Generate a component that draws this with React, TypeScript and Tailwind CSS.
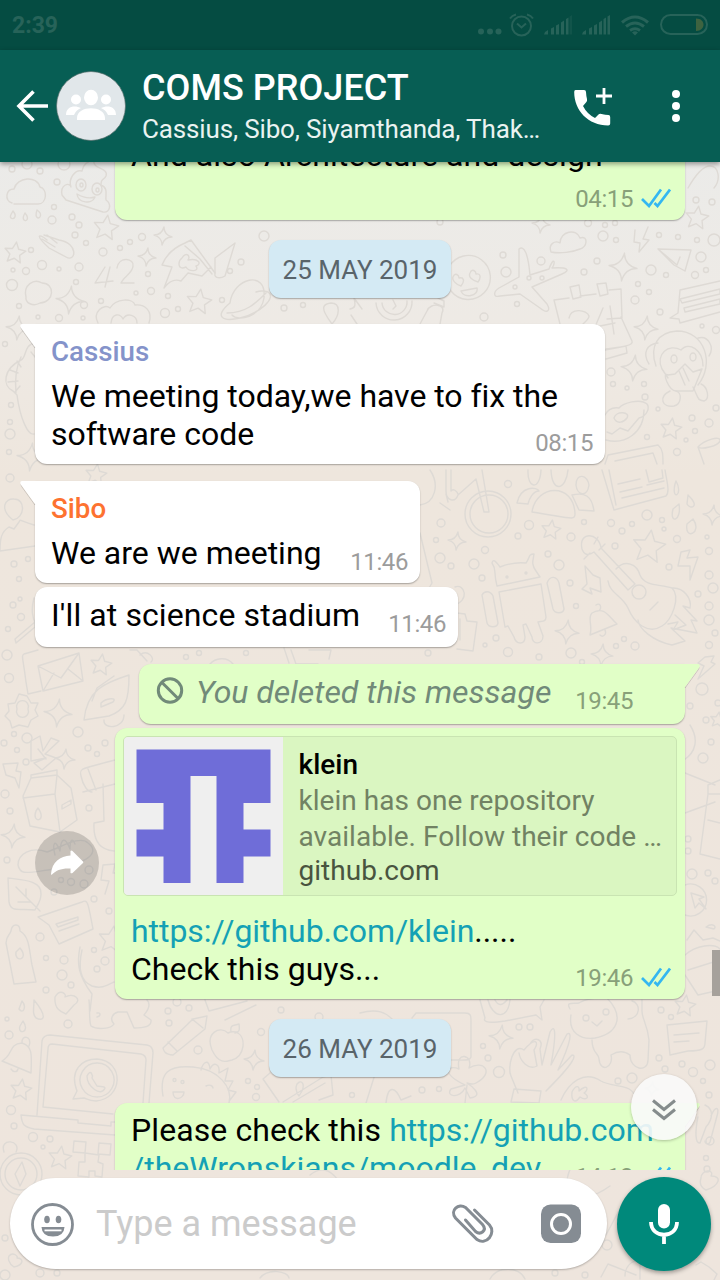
import React from "react";

const CIRCLES: number[][] = [
  [12, 169, 3], [27, 164, 5], [40, 171, 3], [64, 164, 6], [57, 182, 3], [52, 220, 4], [72, 217, 3], [79, 225, 3], [54, 207, 2.5],
  [31, 250, 2.5], [75, 235, 3], [142, 237, 3.5], [130, 242, 2.5], [120, 248, 2.5], [86, 243, 2.5], [103, 252, 4], [42, 265, 4.5], [13, 270, 2], [26, 271, 3.5], [59, 269, 2], [79, 267, 4], [12, 285, 5.5], [76, 282, 2.5],
  [148, 274, 2.5], [151, 291, 3.5], [136, 293, 2], [168, 296, 2.5], [84, 305, 3.5], [101, 301, 2.5], [19, 306, 2.5], [38, 317, 2], [59, 318, 3.5], [83, 318, 2], [165, 313, 4.5], [178, 309, 2.5], [222, 300, 2.5], [230, 271, 2.5], [241, 262, 3], [264, 236, 5], [284, 308, 3], [303, 305, 2.5],
  [5, 344, 2.5], [11, 405, 2.5], [10, 422, 2.5], [10, 434, 5], [9, 452, 2.5],
  [503, 255, 3], [541, 261, 4], [506, 272, 5], [529, 278, 2], [542, 278, 2], [515, 287, 2], [517, 304, 2.5], [484, 317, 4], [597, 261, 3], [584, 272, 3], [603, 236, 5], [616, 240, 2.5], [659, 235, 2.5], [678, 237, 2.5], [697, 240, 2.5], [714, 240, 6], [651, 270, 5], [666, 275, 2.5], [701, 257, 5], [695, 275, 3.5], [706, 270, 2.5], [638, 284, 2.5], [649, 292, 2.5], [635, 300, 4], [660, 312, 3], [702, 326, 2], [716, 330, 3.5],
  [611, 372, 4], [613, 384, 2.5], [627, 388, 2], [644, 384, 2.5], [645, 397, 3], [658, 409, 2], [692, 418, 3], [709, 423, 4], [695, 431, 2.5], [686, 440, 2], [647, 437, 2.5], [677, 452, 3.5], [716, 408, 3],
  [696, 200, 3], [712, 202, 3], [588, 223, 3.5], [605, 225, 2.5], [615, 223, 2.5], [440, 222, 3], [10, 478, 4], [14, 564, 3], [28, 559, 2.5], [19, 579, 2.5], [20, 599, 2], [13, 605, 3], [21, 617, 3.5], [8, 629, 2.5], [7, 655, 5], [9, 678, 4.5],
  [508, 484, 3.5], [441, 523, 4], [436, 540, 2.5], [529, 525, 4.5], [518, 536, 3], [571, 537, 4], [584, 522, 2.5], [611, 523, 3.5], [622, 531, 3], [632, 524, 2.5], [647, 515, 5], [662, 520, 2.5], [664, 529, 2], [677, 539, 3.5], [707, 537, 2], [709, 551, 3.5], [615, 546, 3], [485, 550, 3.5], [548, 554, 3], [440, 558, 5], [451, 566, 3], [474, 564, 5], [559, 565, 5], [482, 578, 3], [570, 583, 3], [669, 567, 3], [709, 575, 4], [713, 588, 5], [698, 594, 3], [709, 606, 4], [709, 620, 5], [715, 633, 3], [709, 645, 3.5], [576, 606, 2.5], [496, 638, 3], [485, 645, 2], [508, 652, 4.5], [539, 657, 3], [571, 653, 5], [616, 646, 2.5], [635, 646, 4], [624, 639, 2.5], [582, 662, 2.5], [428, 653, 3], [186, 657, 2.5], [199, 653, 2.5], [246, 653, 2.5],
  [702, 689, 6], [690, 706, 3], [718, 703, 3], [706, 720, 3], [703, 758, 5], [711, 742, 3],
  [4, 743, 3], [14, 734, 2.5], [27, 738, 5], [17, 750, 2.5], [26, 762, 3], [78, 732, 5], [88, 748, 3], [105, 743, 3], [97, 754, 2.5], [5, 794, 4], [10, 811, 3], [89, 808, 3], [7, 860, 3], [89, 870, 4], [61, 880, 2.5], [71, 882, 3.5], [84, 884, 4], [94, 899, 3], [109, 911, 3], [54, 892, 3], [40, 937, 4], [46, 958, 2.5], [64, 960, 4], [62, 975, 5], [71, 985, 3], [46, 990, 3], [94, 950, 2.5], [105, 961, 4], [97, 969, 3],
  [688, 839, 3], [688, 851, 3], [692, 874, 5], [708, 873, 3], [715, 881, 3],
  [7, 1019, 2], [9, 1035, 4], [68, 1024, 4], [168, 1011, 3], [169, 1023, 3], [177, 1002, 4], [189, 1008, 3], [198, 1050, 4], [261, 1032, 3.5], [281, 1010, 3], [319, 1017, 4], [248, 1081, 2.5], [257, 1087, 2.5], [256, 1097, 3.5], [352, 1095, 2.5], [11, 1110, 4.5], [14, 1126, 3], [33, 1137, 4.5], [50, 1139, 3], [43, 1147, 2], [5, 1238, 3],
  [519, 1027, 3], [530, 1027, 3], [483, 1046, 2.5], [488, 1058, 3], [499, 1072, 5.5], [422, 1090, 3], [439, 1089, 2.5], [661, 1010, 3], [671, 1017, 2.5], [659, 1058, 3], [665, 1069, 3], [682, 1064, 3], [693, 1072, 4.5], [710, 1065, 5], [703, 1081, 2.5], [632, 1078, 5], [618, 1081, 3], [709, 1095, 3], [710, 1141, 4], [706, 1158, 2.5], [707, 1169, 3],
  [607, 1245, 5], [555, 1273, 3], [585, 1275, 3], [5, 1275, 5], [40, 1273, 4], [57, 1273, 3],
];

const STARS: number[][] = [
  [15, 253, 11], [106, 228, 13], [199, 302, 13], [697, 218, 12], [671, 429, 11], [551, 530, 10], [649, 547, 17], [96, 475, 11], [101, 665, 11], [112, 940, 14], [21, 1090, 11], [60, 1158, 12], [685, 1006, 11], [718, 720, 8],
];

const SPARKS: number[][] = [
  [163, 236, 9], [147, 257, 9], [70, 300, 14], [18, 328, 12], [31, 457, 14], [623, 267, 14], [646, 328, 12], [634, 368, 13], [541, 224, 9], [457, 541, 9], [567, 632, 12], [602, 655, 11], [713, 515, 10], [58, 713, 14], [65, 759, 10], [13, 836, 12], [254, 1060, 10], [501, 1037, 12], [652, 1089, 7],
];

const PATHS: string[] = [
  // clouds
  "M12 203c-8-3-6-14 2-14 3-12 23-14 26-2 8 2 7 17-2 17H14",
  "M688 188c8-14 15-22 22-22 9 0 11 14 4 22",
  "M551 252c-3-8 4-12 9-9 0-12 17-15 20-5 9-3 7 10 0 11-7 3-20 5-29 3z",
  "M26 297c-3-12 8-19 16-14 13 0 13 19-2 20-7 4-15 0-14-6z",
  // smiling swirl
  "M62 195c-2-11 8-13 9-8-3-8 4-18 11-16 1-7 6-10 12-11-2 10 15 7 12 16-2 5-5 1-5 9 8 3 4 11 5 15 6 4 4 13-3 12l-37-12z",
  "M77 194c7 4 12 5 18 3-3 8-17 6-18-3z M76 185a5 6 0 1 0 10 0 5 6 0 1 0-10 0 M92 189a5 6 0 1 0 10 0 5 6 0 1 0-10 0 M80 185a1.500 2 0 1 0 3 0 1.500 2 0 1 0-3 0 M96 190a1.500 2 0 1 0 3 0 1.500 2 0 1 0-3 0",
  // rain
  "M13 211c5 6 0 9-2 7-2-2 1-5 2-7z M25 213c5 6 1 9-1 7-2-2 0-5 1-7z M37 210c6 4 3 8 1 8-3-1-2-5-1-8z",
  // mitten and 42
  "M44 235l15 5c20 3 17 23 7 17l-17-9c-13-12-12-16-2-8 M42 239l13 8 M47 235l10 8",
  "M105 267l-10 16 18-2 M110 267l-5 20 M117 268c2-13 18-9 16-2 0 7-10 11-12 17h13",
  // rocket
  "M185 246l15 13 12 15 M215 273l-24-33-6 3c-12 5-19 12-23 22l10 2-8 21c6-8 11-9 17-7l7-8 14 3 9-9",
  "M182 258c4-7 9-2 6 2 11-2 14 4 8 6 4 6-7 6-10 1-9 4-8-6-4-9z M215 258l20-15-10 33c-5 3-11 2-10-2z",
  // saturn
  "M230 303c3-25 37-34 34-5-3 19-26 24-32 17 M230 303c-17 14-7 19 10 15 20-5 37-20 28-26-6-2-12 0-12 0 M227 313c19 0 29-10 39-20",
  // lamb
  "M98 323c-6-11 6-20 12-15 6-10 23-10 25-3 10-1 18 6 14 18 M111 323c1-10 9-10 12-4 4-7 14-4 14 4",
  // pin and note
  "M332 324c-12-16-10-20-1-21 10 0 9 12 1 21z M350 309c5-1 6-3 4-11l8 11 M357 324l-6-9",
  // clock and bottle
  "M376 303a18 18 0 1 0 36-2 M382 303a12 12 0 1 0 25-2 M393 300l3 6-3 3 M420 324l7-13c3-9 20-7 15 2l-2 11 M434 303l10 4v-6l-6-3",
  // heart eyed face
  "M449 267a22 22 0 1 1 2 24 M453 277c2-5 6-2 6 1 5-1 6 3 2 8-6-2-9-6-8-9z M470 273c2-5 6-2 6 1 5-1 5 4 2 8-6-2-10-5-8-9z M461 291l16-3c2 8-13 11-16 3z",
  // aeroplane
  "M519 249c5-4 9 4 11 26l19-6c5-14 7-6 3-1 16-1 19 2 10 6l-30 13 15 17c4 7 0 10-7 4l-20-14-20 2c-8 2-6-5-1-8l20-11z",
  // calendar
  "M554 300l15-2m11-2 16-2m13-4 12-1 1 29-15 1 M554 300l6 24 M570 287l9-2 2 12-8 2z M597 284l9-1 2 11-8 2z M605 350l21-4 1 7-21 6 M621 317l11 24c2 5-12 6-26 8 M569 318c2-11 18-8 20-2 0 3-3 5-6 8",
  "M603 308l-8 19 20-4 M610 306l4 28",
  // bolts
  "M635 230l-1 12 6 1-1 9 10-12-6-1 5-12 M681 552l9-2-3 8 11-1-8 23v-14h-12l3-14z M585 566l8 9 7 3 1 14-11-4 2 6-10-5 5-5-2-18z M3 764l15-1-2 8 5 1-2 16-4-10-9-3z M103 865l12-1-2 9 4 0 M103 865l-2 15 8 1-4 13 M705 657l9-1-3 6 4 2-17 15 6-13-6-3z",
  // paper plane and chat strip
  "M658 249l33 1-6 21-11-6z M658 249l19 16 3-8 M720 281l-40 9-2 23-8 5 9 1 1 4 40-11 M680 299l40-10v5l-38 9z M684 308l36-9v5l-35 8z",
  // monkey
  "M656 366c-7-20 2-34 21-35 28 0 38 33 21 54 M658 343c-11 1-16 10-9 21 M698 338c10-3 17 9 11 18 M681 350c8-9 22 0 22 16 M681 350c-12-7-26 4-19 19l6 9 M671 359a3 4 0 1 0 6 0 3 4 0 1 0-6 0 M690 357a3 4 0 1 0 6 0 3 4 0 1 0-6 0 M668 375c-7-4 1 16 8 16l17 0 9-22-9 3-8-8-10 10-7 1",
  "M670 391c-12 6-8 17 4 15 8-2 8-14 2-15 M693 387c6 12 4 13 11 14 6-2 4-14-3-17 M679 371l6 14 M683 368l6 13",
  // doughnut
  "M605 415c3-6 7-8 14-7 4-5 21-10 28-4 3 4 0 12-8 14l-11 13-8-3-8 6-5-2 M606 440c19 5 38-7 38-30 M614 418c2-8 17-6 13 0-3 4-10 7-13 0z",
  // tree and snail
  "M35 343c-12 2-8 15-14 17-18 9-19 26-8 31l4 4c3 23 11 41 17 39 M31 352l4 5 M17 361l4 6 M10 370l8 3 M8 382l10-1 M15 392l5-6 M21 357c-5 10-6 25-5 36",
  // cup
  "M698 447c6-7 23-12 22-6-2 5-19 9-22 6l6 17 M605 464l3-9 50-10c5 4 5 10 5 19 M615 461l38-8 4 11",
  // people
  "M13 520c-14-11-8-22 1-21 12 0 11 19-1 21z M34 525c-16-5-13-6-15-3l-5 7-5-2c-8 5-9 12-9 24l35-5",
  "M528 470c-1 19 12 21 13 0 M551 470c1 24 15 20 17 0 M576 485c0-13 12-10 13 0-2 13-12 10-13 0z M517 503c4-18 20-16 22-12-6 0-10 8-11 13z M532 512c4-28 42-30 43 2 0 7-4 4-43-2z M572 495c13-3 20 1 22 16l-15-1z",
  // bicycle
  "M465 514a23 23 0 1 0 46 0 23 23 0 1 0-46 0z M470 514a19 19 0 1 0 38 0 19 19 0 1 0-38 0z M482 470l7 42h-5l-8-33-18 16c-3 8-12 6-12-4v-21 M451 470v21c2-3 6 0 7 3 M440 503l10 7 M448 502l-2-8 M430 470c10 15 5 33-10 35",
  // newspaper
  "M602 470l12 40 52-14c4-4 1-14-1-26 M609 470l7 35 M618 484l22-5 M620 492l22-5m5-2 17-4 M622 498l42-10 M646 470l3 12 14-4-1-8",
  // drops
  "M676 481c8 14-5 21-1 3z M688 495c13 12 2 15-1 9z M679 504c3 17-10 21-6 5z M693 519c10 14-9 22-6 5z",
  // android
  "M497 586c-4-15 0-16-5-23 1-4 3-3 8 4 10-4 17-5 26-4 4-5 2-9 8-9-1 7-3 10 2 17l4 6z M499 592l42-8 5 33c0 5-4 4-8 5l5 14c0 9-11 9-11 1l-6-13-3 1 2 12c0 8-9 8-11 0l-6-11-3 1z M482 595c2-4 8-5 11 1l5 27c-1 5-9 5-11 0z M547 583c3-8 10-7 12 0l5 26c-1 5-9 5-11 0z M506 577a1 1 0 1 0 2 0 1 1 0 1 0-2 0 M525 573a1 1 0 1 0 2 0 1 1 0 1 0-2 0",
  // guitar
  "M582 549c-4-18 17-17 19-1l34 36-7 6-34-38c-6 4-10 3-12-3z M616 569c9-10 21-5 24 6 5 12 20 9 32 13 9 9 0 32-10 38-14 9-28-3-34-18-6-13-18-14-20-27 M632 592a7 7 0 1 0 14 0 7 7 0 1 0-14 0 M650 610l8-8 M594 544l4-7 M599 550l6-6 M584 559l6-6 M672 588c12-1 20 11 18 20l-7-2 14 15-6-1 6 13-26-5 14 13-13 4c-19-4-33-16-34-25 M668 624l10-2-5 8 13-5-11-10",
  // bell
  "M590 635c3-10-3-17 2-22 13-7 16 3 25 11z M596 605c6-4 6 7 1 6 M600 635c3 3 7-1 5-5",
  // camera and comma
  "M455 587c10-4 15 14-1 18 3-4-1-7-2-9 M457 613l8 1 2 7 10 1-4 29-16-2 M460 619v21 M420 533l12 50-3 5-7 0",
  // envelopes
  "M38 650l-14 4c-3 2-1 3 2 28l2 12 13-3 M38 666l41-13 4 28-40 10z M38 666l23 12 18-25 M43 691l11-18 M83 681l-15-12",
  // gear
  "M19 694l8 2 4 7 7 0-3 7 3 6-7 4-3 7-9-2-7 3-2-7-5-5 4-5-1-7 7-1z M17 709a6 6 0 1 0 11 0 6 6 0 1 0-11 0",
  // small rocket
  "M84 720c3-30 20-37 45-45 0 25-3 35-20 41z M101 703c5-5 17-6 12-1l-12 5z M92 701l5-13 17-12 M104 720c-1 10 20 9 20-5",
  // envelope peeking and photo
  "M291 650l5 14 22 0 M309 650l22 0-2 9 M284 648l5 15 M210 664c5-6 17-8 23 0 M130 650l7 0 10 11 M140 655c7-6 16 3 11 7",
  // windmill
  "M31 741l9-5 3 15 8-13 8 3-14 13 11 4-14 12-8-7 12-5-15 3z M38 749l8 10",
  // milk carton
  "M23 796l8-18 26-3 14 13 6 32-17 12-30-6z M23 798l32-4 2-19 M55 794l5 38 M31 778l0-3 26-5v6 M62 805l9-5v4l-9 5z M38 808c10 14-7 16-2 3z",
  // cylinder and scroll
  "M81 776c-2-8 0-7 34-16 M83 792l32-8 M81 776c2 10 7 16 11 16 M88 769l8 21 M103 784l1 37-10 2c-1 18 6 27 20 28",
  // baguette
  "M47 852c-16-6-29 2-29 13 2 10 8 8 30 5 33-4 55-16 40-27-8-8-26 4-41 9 M55 855c-3-12 0-17 5-4 1-13 5-15 10-2 0-9 2-12 5-5",
  // leaf
  "M8 878c17 2 34 3 33 16 0 8-5 13-6 16-16-2-24 3-26-8z M16 887l24 24 M26 897v-8 M31 902l-13 0",
  // message box
  "M38 917l44-15c6-3 6 1 11 27l-34 15-10-19z M56 924l22-7v3l-20 7z M59 931l20-7",
  // bottle
  "M11 931c1-8 9-8 9 0 10 6 9 19 12 34l4 17-22 2-8-41c0-7 4-8 5-12z M20 948c10 12-6 15-4 4z",
  // banana
  "M82 950c-4 18-2 31 10 36 9 3 14 0 22-4 M80 947c-3 15-3 27 12 47l-2 17",
  // hearts
  "M55 997c5-9 12-3 10 0 9-5 18 3 9 8l-8 9c-5-2-12-5-11-17z M9 1256c4-5 10 1 8 2 7 0 7 7-3 9-6-4-6-9-5-11z M701 1178c0-9 14-9 10-2 12 0 8 10-5 14-4-2-7-6-5-12z",
  // polar bear
  "M89 1000c1 10 0 22 2 26 6 4 20 3 23-2-5-5-1-11 4-12l9 0 7 16c9 0 18-1 17-8l-7-5c5-6 7-11 3-15 M97 1013c4-1 4 3 0 4",
  "M22 1001l-3 8c4 6 8-2 3-8z M34 1000c14 17 10 22 2 18-4-4-2-9-2-18z M23 1021c8 12-6 14-3 5z",
  // pencil and apple
  "M163 1048l30-29 14-3-2 13-32 26c-9-1-9-4-10-7z M168 1042l9 9 M192 1019l11 9 M228 1033c-8-8-23 0-16 17 8 17 17 10 20 10 13-4 14-22 6-27-4-2-8-1-10 0z M231 1032c-1-8 2-6 8-8 1 7 0 8-4 9",
  // bell left
  "M2 1061c12-7 6-17 20-18 10 3 10 10 9 30z M22 1043c-1-9 11-7 7 3 M11 1069c2 3 6 4 7 0",
  // laptop
  "M37 1115l5-74c1-5 4-6 8-6l97 10c5 1 6 5 6 8l-4 50 M43 1107l5-58c0-4 2-5 4-5l89 10c4 1 5 4 5 6l-3 43 M43 1107l70 7 M21 1115l57 5v3l33 3v-4l4 0 M21 1115c1 10 3 12 13 14l81 6",
  "M73 1099l4-8c-8-21 5-32 20-32 28 2 26 40-1 42-7 0-9-2-12-3z M97 1063a17 17 0 1 0 .1 0 M87 1076c4-8 6 0 5 2l5 8c3 1 7 0 8 2-4 10-18-2-18-12z",
  // dinosaur
  "M163 1096c-4-24 6-31 30-29 26 2 40 21 36 36 M201 1070c2-8 8-12 9-1 4-8 10-5 9 4l9-5-3 13 8 0-5 9 8 2-6 8 M173 1092l11 0c0 7-11 10-11 0z M173 1080a1.500 1.500 0 1 0 3 0 1.500 1.500 0 1 0-3 0 M181 1082a1.500 1.500 0 1 0 3 0 1.500 1.500 0 1 0-3 0 M206 1086c4-2 7 0 7 2",
  // wallet map
  "M263 1079l7-6 M263 1079l16 23 M299 1096c-10-15 9-20 3-5z M283 1102l40-25 8-2 2 20-14 5 M293 1102l32-19",
  // compass and robot
  "M0 1174a20 20 0 1 1 42 0 21 21 0 0 1-42 0z M5 1174a16 16 0 1 1 32 0 16 16 0 1 1-32 0z M22 1162l4 12-6 12-5-12z M4 1152c-5-15 18-12 12 0",
  "M74 1141l12 1-1 11-12-1z M99 1143l12 1-1 11-12-1z M85 1153l14 2-1 7 5 2-1 13-7-1v-5h-6v6l-11-1 1-14 6 0z",
  // seated laptop and tablet
  "M480 1000l5 18c-3 5 7 5 20 3l31-6 6 5-2-13 4-7 M488 1000c5 19 20 20 22 0 M495 1000c3 6 7 6 12 0",
  "M412 1018l4-5 49 0c6 0 6 3 6 8v36c-1 4-5 3-20 3 M360 1013c18-5 26 0 32 6",
  "M205 1000l4 11 38-10 M225 1020l31-15",
  // clover
  "M465 1085c-25-12-17-21-6-16-4-19 15-14 10-1 15-9 26 5 7 15-3 2-9 0-9 0s20 13 3 15l-5-10c-5 11-20 9-14 1z M467 1085l-2 18",
  // ok hand
  "M518 1093l-7-17c-4-8 2-34 13-26 11-13 16-9 10 0l3 16c-9 5-17-6-18-13 M530 1044c5-8 14-5 10 5l2 16 8-33c5-9 7-1 1 33l16-31c5-3 5 6-9 36l14-15c5 0 2 8-26 36 M514 1089l27 2-2 12-28-1z",
  // cat
  "M570 1009c-5-8 4-5 9-6 6-4 13-4 17-5 5-1 8-2 11 0 19 20 9 36-12 40-14 2-27-5-24-23 M583 1018a3 3 0 1 0 6 0 3 3 0 1 0-6 0 M603 1012a3 3 0 1 0 6 0 3 3 0 1 0-6 0 M592 1022l5 4 5-5 M592 1040c0 14 7 13 7 19 1 14 15 9 12-4 8-5 14-4 19 0 0 15 18 18 18 5l1-20c-2-18-8-22-7-31l0-9 M632 1001c9 2 9 17-4 18",
  "M561 1100c8-18 23-30 40-19 10 6 28 3 33 13 M572 1092c4-8 8-6 7-1 9-8 10-1 5 2 7 4 2 8-4 4-5 7-9 4-8-5z",
  // note box
  "M667 1025l40-4-2 22c0 6-3 8-17 8l-18 4z M674 1035l25-2 M674 1042l15-1",
  // party horn
  "M366 1103l10-32 M386 1103c2-20 10-15 15-3l10-4 M373 1075l5-4",
  // kite, bulb, arcs
  "M685 773l30 12 M685 813l30-11 M720 780l-12 5v9h12 M708 794l-8 60 20 5 M708 820l12 3 M684 760c12-8 15-21 6-35",
  "M685 885a16 16 0 1 1 0 30 M691 893l13 4-5 2 7 10-7-6-4 5z",
  "M687 940l7-10 9 10 10-2 7 3 M685 955c11-10 29-12 35-6 M685 975l13 20 22-5 M688 970l32-10 M706 927c7-5 11 0 8 2z",
  // objects behind the composer
  "M567 1180c4-24 22-29 34-13 M568 1190c8 14 28 6 42-4 M606 1235l16-30 M601 1277l7-13 28 11 M625 1276c0-18 22-21 31-6 M640 1264v15 M696 1265l5-3 8 5 8 7-3 6 M310 1175c10-8 19-7 28 5 M260 1278c8-10 28-7 29 0 M490 1279c8-14 30-12 35 0",
  "M705 1105c9 4 8 14 1 22l-6 16c-5 1-5-12-2-26 M711 1116c4-10 9-10 6 0l-7 26c-1 3-5 2-5-1",
  "M15 639l20-17v5l-19 16z M36 625c-4-8-5-15-2-27",
];

const starPath = "M0-1 .28-.38.95-.3.45.16.6.82 0 .48-.6.82-.45.16-.95-.3-.28-.38Z";
const sparkPath = "M0-1Q.1-.15 1 0 .15.1 0 1-.1.15-1 0-.15-.1 0-1Z";

function Wallpaper() {
  return (
    <svg className="absolute inset-0 h-full w-full" viewBox="0 0 720 1280" aria-hidden="true">
      <defs>
        <linearGradient id="paper" x1="0" y1="0" x2="0" y2="1">
          <stop offset="0.12" stopColor="#ebebe9" />
          <stop offset="0.25" stopColor="#eeeae5" />
          <stop offset="0.37" stopColor="#eee6dd" />
          <stop offset="1" stopColor="#eee5dd" />
        </linearGradient>
      </defs>
      <rect width="720" height="1280" fill="url(#paper)" />
      <g fill="none" stroke="#dedad5" strokeWidth="1.4" strokeLinejoin="round" strokeLinecap="round">
        {CIRCLES.map(([x, y, r], i) => (
          <circle key={i} cx={x} cy={y} r={r} />
        ))}
        {STARS.map(([x, y, r], i) => (
          <path key={i} d={starPath} transform={`translate(${x} ${y}) rotate(8) scale(${r})`} strokeWidth={1.4 / r} />
        ))}
        {SPARKS.map(([x, y, r], i) => (
          <path key={i} d={sparkPath} transform={`translate(${x} ${y}) rotate(6) scale(${r})`} strokeWidth={1.4 / r} />
        ))}
        {PATHS.map((d, i) => (
          <path key={i} d={d} />
        ))}
      </g>
    </svg>
  );
}

function StatusBar() {
  return (
    <div className="flex h-[50px] shrink-0 items-center justify-between bg-[#054c42] pl-3 pr-[12px] text-[#276359]">
      <span className="pt-[2px] text-[23px] font-bold leading-[30px]">2:39</span>
      <svg className="h-[50px] w-[232px]" viewBox="476 0 232 50" fill="none" stroke="currentColor">
        <g fill="currentColor" stroke="none">
          <circle cx="481" cy="31.500" r="3" />
          <circle cx="490" cy="31.500" r="3" />
          <circle cx="498.500" cy="31.500" r="3" />
          <path d="M545 32l3-2v4.500h-4zM551 28.500l3-1.500v7.500h-3zM556 25.500l3-1.500v10.500h-3zM561 22.500l3-2v14h-3zM566 19l2.500-1.500v17H566z" />
          <path d="M569.500 16.500l2.500-1.500v19.500h-2.500z" opacity=".35" />
          <path d="M583 32l3-2v4.500h-4zM589 28.500l3-1.500v7.500h-3zM594 25.500l3-1.500v10.500h-3zM599 22.500l3-2v14h-3zM603.500 19l2.500-1.500v17h-2.500zM607.500 16.500l2.500-1.500v19.500h-2.500z" />
          <path d="M635 35.500l-3-3q3-2.500 6 0z" />
        </g>
        <g strokeWidth="2">
          <circle cx="521.500" cy="26" r="9.500" />
          <path d="M517 23.500l4.500 4 4.500-4M510 18.500q2-3 6-4M533 18.500q-2-3-6-4" />
        </g>
        <g strokeWidth="3">
          <path d="M622 22.500q13-11 26 0M626 26.500q9-7 18 0M630 30.500q5-3.500 10 0" />
        </g>
        <rect x="661" y="15" width="46" height="19" rx="9.500" strokeWidth="2" />
        <path d="M696 18.500c5 0 7.500 3 7.500 6.200s-2.500 6.200-7.500 6.200z" fill="#3e6340" stroke="none" />
      </svg>
    </div>
  );
}

function Header() {
  return (
    <header className="z-10 flex h-[112px] shrink-0 items-center bg-[#075e54] text-white shadow-[0_2px_5px_rgba(0,0,0,0.4)]">
      <svg className="ml-4 h-8 w-8" viewBox="0 0 32 32" fill="none" stroke="currentColor" strokeWidth="3.600">
        <path d="M17.500 1.500 3 16l14.500 14.500M3 16h29" />
      </svg>
      <svg className="ml-2 h-[70px] w-[70px]" viewBox="0 0 70 70" fill="#fff">
        <circle cx="35" cy="35" r="34.500" fill="#e1e7ea" stroke="#526c68" strokeWidth="0.700" />
        <ellipse cx="35" cy="26.500" rx="7" ry="7.700" />
        <circle cx="20" cy="28.500" r="5" />
        <circle cx="50" cy="28.500" r="5" />
        <path d="M21 49v-2c0-13 28-13 28 0v2zM10 44c0-9 9-10 15-7q-5 2-7 7zM60 44c0-9-9-10-15-7q5 2 7 7z" />
      </svg>
      <div className="ml-4 flex w-[400px] flex-col whitespace-nowrap">
        <span className="text-[36px] font-medium leading-[42px] tracking-[0.05px]">COMS PROJECT</span>
        <span className="mt-1 text-[26px] leading-[32px] tracking-[-0.15px] text-[#eaf3f1]">
          Cassius, Sibo, Siyamthanda, Thak…
        </span>
      </div>
      <svg className="ml-[31px] h-10 w-10" viewBox="573 86 40 40" fill="currentColor">
        <path d="M575.500 90h8.500q2 0 2 2 .2 4 1 7 .5 2-1 3.500L583 106q4 8 12 12l3.500-3.500q1-1 3-.500 4 1 7 1 1.700 0 1.700 2v6.500q0 2-2 2c-20 0-34-15-34-33.500q0-2 1.300-2z" />
        <path d="M602.600 88h2.800v6.600h6.600v2.800h-6.600v6.600h-2.800v-6.600H596v-2.800h6.600z" />
      </svg>
      <svg className="ml-[59px] h-8 w-2" viewBox="0 0 8 32" fill="currentColor">
        <circle cx="4" cy="4" r="4" />
        <circle cx="4" cy="16" r="4" />
        <circle cx="4" cy="28" r="4" />
      </svg>
    </header>
  );
}

function Ticks() {
  return (
    <svg className="-mt-[2px] ml-2 h-[20px] w-[30px]" viewBox="0 0 30 20" fill="none" stroke="#34b7f1" strokeWidth="2.700">
      <path d="M1 11l7 7L20 1.500M13.500 15l3 3L29 1.500" />
    </svg>
  );
}

function Time({ children, out, read }: { children: string; out?: boolean; read?: boolean }) {
  return (
    <div
      className={
        "-mb-1 flex items-center text-[24px] leading-[28px] tracking-[-0.4px] " +
        (out ? "text-[#88a079]" : "text-[#9c9c9c]")
      }
    >
      <span>{children}</span>
      {read && <Ticks />}
    </div>
  );
}

function Tail({ side }: { side: "left" | "right" }) {
  return side === "left" ? (
    <svg className="absolute -left-[15px] top-0 h-[25px] w-[20px]" viewBox="0 0 20 25">
      <path d="M2 1.500Q0 4 2 6l13 18" fill="none" stroke="#000" strokeOpacity=".14" />
      <path d="M20 0H2Q0 0 .3 2T2 5l13 18h5z" fill="#fff" />
    </svg>
  ) : (
    <svg className="absolute -right-[15px] top-0 h-[25px] w-[20px]" viewBox="0 0 20 25">
      <path d="M19 3q0 2-1 3L5 24" fill="none" stroke="#000" strokeOpacity=".14" />
      <path d="M0 0h18q2 0 1.700 2T18 5L5 23H0z" fill="#e1ffc7" />
    </svg>
  );
}

const inBubble = "relative ml-[35px] self-start rounded-xl bg-white pl-4 pr-3 shadow-[0_1px_1.500px_rgba(0,0,0,0.3)]";
const outBubble = "relative mr-[35px] self-end rounded-xl bg-[#e1ffc7] pl-4 shadow-[0_1px_1.500px_rgba(0,0,0,0.3)]";
const line = "flex h-[38px] items-end justify-between whitespace-nowrap";
const sender = "mb-2 h-[34px] text-[27.7px] font-medium leading-[34px]";

function DatePill({ children }: { children: string }) {
  return (
    <div className="flex h-[58px] w-[182px] shrink-0 items-center justify-center self-center rounded-xl bg-[#d4eaf4] pt-[2px] text-[26px] text-[#59646a] shadow-[0_1px_1.500px_rgba(0,0,0,0.3)]">
      {children}
    </div>
  );
}

function LinkPreview() {
  return (
    <div className="flex h-[160px] overflow-hidden rounded-[5px] border border-[#c9e4b2] bg-[#daf6c1]">
      <svg className="h-[158px] w-[159px] shrink-0" viewBox="0 0 159 158">
        <rect width="159" height="158" fill="#efefef" />
        <path
          d="M12.500 12.500h134v53.500h-27v26.500h27v27h-27v26.500h-27V39H66.500v107h-27V119.500h-27V92.500h27V66h-27z"
          fill="#6f6dd8"
        />
      </svg>
      <div className="flex flex-col whitespace-nowrap pl-[15.500px] pt-[11px] text-[28px] tracking-[0.03px]">
        <span className="h-[36px] font-medium leading-[34px] text-black">klein</span>
        <span className="h-[36px] leading-[34px] text-[#718263]">klein has one repository</span>
        <span className="h-[34px] leading-[34px] text-[#718263]">available. Follow their code …</span>
        <span className="h-[36px] leading-[34px] text-[#49543f]">github.com</span>
      </div>
    </div>
  );
}

function Composer() {
  return (
    <footer className="relative flex h-[110px] shrink-0 items-start pl-[10px] pt-[7px]">
      <div className="mt-px flex h-[91px] w-[597px] items-center rounded-full bg-white pl-[21px] shadow-[0_1px_2px_rgba(0,0,0,0.25)]">
        <svg className="h-[44px] w-[44px]" viewBox="0 0 44 44" fill="#858c93">
          <circle cx="21.500" cy="22.500" r="20" fill="none" stroke="#858c93" strokeWidth="2.800" />
          <ellipse cx="16" cy="17.500" rx="2.800" ry="3.800" />
          <ellipse cx="27.500" cy="17.500" rx="2.800" ry="3.800" />
          <path d="M10.500 25h23q-.5 9.500-11.500 9.500T10.500 25z" />
          <path d="M13.500 27.500h17v1.800h-17z" fill="#fff" />
        </svg>
        <span className="ml-[21px] w-[355px] pt-px text-[36px] text-[#cbcbcb]">Type a message</span>
        <svg className="h-[42px] w-[44px]" viewBox="451 1203 44 42" fill="none" stroke="#858c93" strokeWidth="3" strokeLinecap="round">
          <path d="M474.500 1210l15 15c7 8-3 21-12.500 14.500L455.500 1218c-6-8 3-15 10-10.500l17 17c5 6-2 11-7 7l-10-11.500" />
        </svg>
        <svg className="ml-[45px] h-[40px] w-[42px]" viewBox="0 0 42 40">
          <rect x="1" y="0.500" width="40" height="38.500" rx="9.500" fill="#858c93" />
          <circle cx="21" cy="20" r="9.500" fill="none" stroke="#fff" strokeWidth="3" />
        </svg>
      </div>
      <button className="ml-[10px] flex h-[94px] w-[94px] items-center justify-center rounded-full bg-[#00897b] shadow-[0_2px_4px_rgba(0,0,0,0.35)]" aria-label="Record">
        <svg className="h-[42px] w-[30px]" viewBox="0 0 30 42" fill="none" stroke="#fff">
          <path d="M15 7v12.500" strokeWidth="12" strokeLinecap="round" />
          <path d="M2 19c0 17 26 17 26 0M15 32v9" strokeWidth="3.800" />
        </svg>
      </button>
    </footer>
  );
}

export default function App() {
  return (
    <div className="relative flex h-[1280px] w-[720px] flex-col overflow-hidden font-['Roboto',sans-serif] text-black">
      <Wallpaper />
      <div className="relative z-10 flex shrink-0 flex-col">
        <StatusBar />
        <Header />
      </div>
      <main className="relative flex h-[1008px] shrink-0 flex-col overflow-hidden text-[32px] leading-[38px]">
        <div className={outBubble + " -mt-[38px] flex h-[96px] w-[570px] shrink-0 flex-col pr-[14px] pt-3"}>
          <div className={line + " tracking-[0.06px]"}>And also Architecture and design</div>
          <div className="mt-[11px] flex justify-end">
            <Time out read>04:15</Time>
          </div>
        </div>
        <div className="mt-5 flex flex-col">
          <DatePill>25 MAY 2019</DatePill>
        </div>

        <div className={inBubble + " mt-[26px] h-[140px] w-[570px] shrink-0 rounded-tl-none pt-[11px]"}>
          <Tail side="left" />
          <div className={sender + " text-[#8493ca]"}>Cassius</div>
          <div className={line + " tracking-[-0.03px]"}>We meeting today,we have to fix the</div>
          <div className={line}>
            <span>software code</span>
            <Time>08:15</Time>
          </div>
        </div>

        <div className={inBubble + " mt-[17px] h-[102px] w-[385px] shrink-0 rounded-tl-none pt-[11px]"}>
          <Tail side="left" />
          <div className={sender + " text-[#fd7230]"}>Sibo</div>
          <div className={line}>
            <span>We are we meeting</span>
            <Time>11:46</Time>
          </div>
        </div>

        <div className={inBubble + " mt-1 h-[60px] w-[423px] shrink-0 pt-[9px]"}>
          <div className={line}>
            <span className="tracking-[0.1px]">I'll at science stadium</span>
            <Time>11:46</Time>
          </div>
        </div>

        <div className={outBubble + " mt-[17px] h-[60px] w-[546px] shrink-0 rounded-tr-none pr-[52px] pt-[9px]"}>
          <Tail side="right" />
          <div className={line}>
            <span className="flex items-center italic text-[#718a79]">
              <svg className="mb-1 ml-px mr-3 h-[28px] w-[28px]" viewBox="0 0 28 28" fill="none" stroke="currentColor" strokeWidth="3">
                <circle cx="14" cy="14.500" r="11.700" />
                <path d="M5.700 6.200l16.600 16.600" />
              </svg>
              You deleted this message
            </span>
            <Time out>19:45</Time>
          </div>
        </div>

        <div className="mt-1 flex shrink-0 items-center">
          <svg className="mb-px ml-[35px] h-16 w-16" viewBox="0 0 64 64">
            <circle cx="32" cy="32" r="32" fill="#000" opacity=".16" />
            <path d="M16 43c1-12 9-18 19.500-18.500V20q1-1 2 0L48 30.500q.7.700 0 1.400L37.500 42q-1 .7-2 0v-4.500C27 37 21 39 16.500 44z" fill="#fff" />
          </svg>
          <div className={outBubble + " ml-4 h-[271px] w-[570px] pr-[14px] pt-2"}>
            <div className="-ml-2 -mr-[6px]">
              <LinkPreview />
            </div>
            <div className={line + " mt-4 justify-start tracking-[-0.04px]"}>
              <span className="text-[#14a1b5]">https://github.com/klein</span>
              <span>.....</span>
            </div>
            <div className={line}>
              <span>Check this guys...</span>
              <Time out read>19:46</Time>
            </div>
          </div>
        </div>

        <div className="mt-5 flex flex-col">
          <DatePill>26 MAY 2019</DatePill>
        </div>

        <div className={outBubble + " mt-[26px] h-[95px] w-[570px] shrink-0 rounded-tr-none pr-[14px] pt-2"}>
          <Tail side="right" />
          <div className={line}>
            <span>
              <span className="tracking-[0.1px]">Please check this </span>
              <span className="text-[#14a1b5]">https://github.com</span>
            </span>
          </div>
          <div className={line}>
            <span className="text-[#14a1b5]">/theWronskians/moodle_dev</span>
            <Time out read>14:13</Time>
          </div>
        </div>

        <div className="absolute right-0 top-[788px] h-[46px] w-2 bg-[#a6a19b]" />
        <button className="absolute right-[23px] top-[912px] flex h-[66px] w-[66px] items-center justify-center rounded-full bg-[#fafafa]/90 shadow-[0_1px_3px_rgba(0,0,0,0.25)]" aria-label="Scroll to bottom">
          <svg className="mt-[6px] h-6 w-6" viewBox="0 0 24 24" fill="none" stroke="#858c8c" strokeWidth="3">
            <path d="M1 2.500l11 9 11-9M1 11.500l11 9 11-9" />
          </svg>
        </button>
      </main>
      <Composer />
    </div>
  );
}
